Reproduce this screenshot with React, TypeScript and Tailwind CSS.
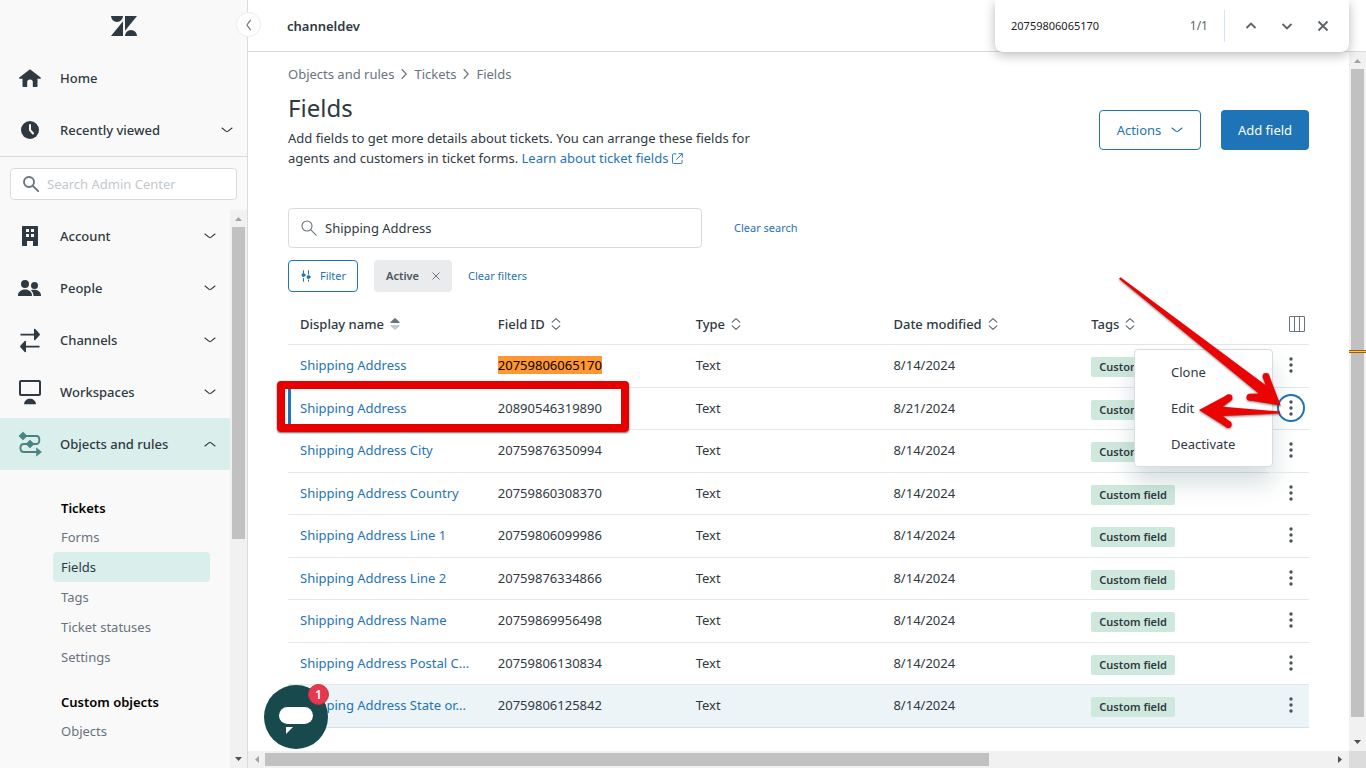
import type { ReactNode } from "react";

type IconProps = { className?: string };

function ChevronDown({ className = "" }: IconProps) {
  return (
    <svg viewBox="0 0 12 12" className={`size-3 shrink-0 ${className}`} fill="none" stroke="currentColor" strokeWidth="1.1" strokeLinecap="round" aria-hidden="true">
      <path d="M1 4l4.2 3.4c.5.4 1.1.4 1.6 0L11 4" />
    </svg>
  );
}

function ChevronRight() {
  return (
    <svg viewBox="0 0 12 12" className="size-3" fill="none" stroke="currentColor" strokeWidth="1.1" strokeLinecap="round" strokeLinejoin="round" aria-hidden="true">
      <path d="M4 1.5L8.2 6 4 10.5" />
    </svg>
  );
}

function SearchIcon({ className = "", width = 1 }: IconProps & { width?: number }) {
  return (
    <svg viewBox="0 0 16 16" className={`size-4 shrink-0 ${className}`} fill="none" stroke="currentColor" strokeWidth={width} strokeLinecap="round" aria-hidden="true">
      <circle cx="6" cy="6" r="5" />
      <path d="M9.8 9.8l5.4 5.4" />
    </svg>
  );
}

function NavIcon({ children }: { children: ReactNode }) {
  return (
    <svg viewBox="0 0 26 26" className="ml-[17px] size-[26px] shrink-0" fill="currentColor" aria-hidden="true">
      {children}
    </svg>
  );
}

const homeIcon = (
  <NavIcon>
    <path d="M13 4.2L2.3 12.6c-.5.5-.2 1.2.4 1.2H5.500v7.500c0 .5.3.800.800.800h3.900v-4.800a2.800 2.800 0 0 1 5.600 0v4.800h3.900c.5 0 .8-.3.8-.8v-7.500h2.800c.6 0 .9-.7.4-1.200L13 4.200z" />
  </NavIcon>
);

const clockIcon = (
  <NavIcon>
    <circle cx="13" cy="13" r="9" />
    <path d="M13 8v5l3 3.500" fill="none" stroke="#f9f9f9" strokeWidth="2" strokeLinecap="round" strokeLinejoin="round" />
  </NavIcon>
);

const accountIcon = (
  <NavIcon>
    <path fillRule="evenodd" d="M6 3h14c.6 0 1 .4 1 1v18c0 .6-.4 1-1 1h-4v-5h-6v5H6c-.6 0-1-.4-1-1V4c0-.6.4-1 1-1zm3 3v3h3V6H9zm5 0v3h3V6h-3zm-5 5v3h3v-3H9zm5 0v3h3v-3h-3z" />
  </NavIcon>
);

const peopleIcon = (
  <NavIcon>
    <circle cx="8" cy="9" r="4" />
    <circle cx="17.500" cy="10.500" r="3.500" />
    <path d="M1 20.500C1 17 4 14.500 8 14.500s7 2.500 7 6v.5H1zM13.800 15.200c4.900-1.200 10.200.5 10.200 5.300v.500h-7.500c0-2.500-1-4.500-2.700-5.800z" />
  </NavIcon>
);

const channelsIcon = (
  <NavIcon>
    <path d="M3.500 6.800H17V2.600c0-.7.800-1 1.300-.5l4.300 4.700c.5.500.5 1 0 1.500l-4.300 4.600c-.5.500-1.300.2-1.300-.5V8.400H3.500zM22.500 18.800H9v-4.200c0-.7-.8-1-1.300-.5l-4.300 4.700c-.5.5-.5 1 0 1.500l4.300 4.600c.5.500 1.300.2 1.300-.5v-4H22.500z" />
  </NavIcon>
);

const workspacesIcon = (
  <NavIcon>
    <rect x="3" y="2" width="20" height="14" rx="1" fill="none" stroke="currentColor" strokeWidth="2" />
    <path d="M7 25.200c.3-3.500 3-5.400 6-5.400s5.700 1.900 6 5.400z" />
  </NavIcon>
);

const rulesIcon = (
  <NavIcon>
    <path d="M6 5h13.500c3.800 0 3.800 8 0 8H7c-4.800 0-4.800 8 0 8h13" fill="none" stroke="currentColor" strokeWidth="1.900" />
    <path d="M6 .900L10.100 5 6 9.100 1.900 5zM13 9l4.100 4-4.100 4-4.100-4zM19.500 17l5 4-5 4.100z" stroke="currentColor" strokeLinejoin="round" strokeWidth=".6" />
  </NavIcon>
);

function NavRow({ icon, label, open, current, chevron = true }: { icon: ReactNode; label: string; open?: boolean; current?: boolean; chevron?: boolean }) {
  return (
    <button type="button" className={`flex h-13 w-full items-center pr-[14px] text-left ${current ? "bg-[#daeeec] text-[#4a8482]" : "text-[#2f3941]"}`}>
      {icon}
      <span className="ml-[17px] grow font-medium text-[#2f3941]">{label}</span>
      {chevron && <ChevronDown className={`text-[#2f3941] ${open ? "rotate-180" : ""}`} />}
    </button>
  );
}

function SubLink({ label, current }: { label: string; current?: boolean }) {
  return (
    <li>
      <a href="#" className={`flex h-[30px] items-center rounded px-2 ${current ? "bg-[#daeeec] text-[#2f3941]" : "text-[#68737d]"}`}>
        {label}
      </a>
    </li>
  );
}

function ScrollArrow({ className }: { className: string }) {
  return (
    <svg viewBox="0 0 17 17" className={`size-[17px] shrink-0 ${className}`} fill="currentColor" aria-hidden="true">
      <path d="M5 11h7L8.500 7z" />
    </svg>
  );
}

function Sidebar() {
  return (
    <aside className="relative flex w-[248px] shrink-0 flex-col border-r border-[#d8dcde] bg-[#f9f9f9]">
      <div className="flex h-13 shrink-0 items-center justify-center">
        <svg viewBox="0 0 26 20" className="h-5 w-[26px]" fill="#2f3941" role="img" aria-label="Zendesk">
          <path d="M0 0h12a6 6 0 0 1-12 0zM12 5.200V20H0zM14 0h12L14 14.800zM14 20a6 6 0 0 1 12 0z" />
        </svg>
      </div>
      <button type="button" aria-label="Collapse navigation" className="absolute top-3 -right-[14px] z-10 flex size-[25px] items-center justify-center rounded-full border border-[#ececee] bg-white text-[#68737d]">
        <svg viewBox="0 0 12 12" className="size-3" fill="none" stroke="currentColor" strokeWidth="1.100" strokeLinecap="round" strokeLinejoin="round" aria-hidden="true">
          <path d="M7.500 1.200L4.300 5.300c-.4.500-.4.900 0 1.400l3.200 4.100" />
        </svg>
      </button>
      <div className="shrink-0 border-b border-[#d8dcde]">
        <NavRow icon={homeIcon} label="Home" chevron={false} />
        <NavRow icon={clockIcon} label="Recently viewed" />
      </div>
      <div className="shrink-0 px-[10px] pt-[11px] pb-[10px]">
        <label className="flex h-8 items-center gap-2 rounded border border-[#d8dcde] bg-white px-3 text-[#68737d]">
          <SearchIcon width={1.9} />
          <input type="search" aria-label="Search Admin Center" placeholder="Search Admin Center" className="w-full min-w-0 bg-transparent outline-none placeholder:text-[#c2c8cc]" />
        </label>
      </div>
      <div className="flex min-h-0 grow">
        <nav className="min-w-0 grow overflow-hidden">
          <NavRow icon={accountIcon} label="Account" />
          <NavRow icon={peopleIcon} label="People" />
          <NavRow icon={channelsIcon} label="Channels" />
          <NavRow icon={workspacesIcon} label="Workspaces" />
          <NavRow icon={rulesIcon} label="Objects and rules" current open />
          <div className="flex flex-col gap-5 pt-7 pr-5 pl-[53px]">
            <section>
              <h2 className="mb-1 px-2 font-semibold text-black">Tickets</h2>
              <ul>
                <SubLink label="Forms" />
                <SubLink label="Fields" current />
                <SubLink label="Tags" />
                <SubLink label="Ticket statuses" />
                <SubLink label="Settings" />
              </ul>
            </section>
            <section>
              <h2 className="mb-1 px-2 font-semibold text-black">Custom objects</h2>
              <ul>
                <SubLink label="Objects" />
              </ul>
            </section>
          </div>
        </nav>
        <div className="flex w-[17px] shrink-0 flex-col bg-[#f1f1f1]">
          <ScrollArrow className="text-[#a3a3a3]" />
          <div className="min-h-0 grow">
            <div className="mx-auto h-[59.600%] w-[13px] bg-[#c1c1c1]" />
          </div>
          <ScrollArrow className="rotate-180 text-[#505050]" />
        </div>
      </div>
    </aside>
  );
}

function FindBar() {
  return (
    <div role="search" className="absolute top-0 right-[17px] z-30 flex h-[52px] w-[354px] items-center rounded-b-lg bg-white pr-3 pl-4 shadow-[0_3px_12px_rgba(0,0,0,0.28)]">
      <input aria-label="Find in page" defaultValue="20759806065170" className="min-w-0 grow bg-transparent text-[11px] text-[#202124] outline-none" />
      <span className="mr-4 text-xs text-[#5f6368]">1/1</span>
      <span className="mr-3 h-8 w-px bg-[#d3e3fd]" />
      <div className="flex text-[#5f6368]">
        {[
          ["Previous", "M3.500 9L8 4.500 12.500 9"],
          ["Next", "M3.500 5L8 9.500 12.500 5"],
          ["Close", "M3.500 2.500l9 9M12.500 2.500l-9 9"],
        ].map(([name, d]) => (
          <button key={name} type="button" aria-label={name} className="flex size-7 items-center justify-center not-last:mr-2">
            <svg viewBox="0 0 16 14" className="h-[14px] w-4" fill="none" stroke="currentColor" strokeWidth="1.900" aria-hidden="true">
              <path d={d} />
            </svg>
          </button>
        ))}
      </div>
    </div>
  );
}

function SortIcon({ active }: { active?: boolean }) {
  return active ? (
    <svg viewBox="0 0 10 12" className="h-3 w-[10px]" aria-hidden="true">
      <path d="M1 5h8c.6 0 .8-.5.5-.9L5.700.400a1 1 0 0 0-1.400 0L.500 4.100C.200 4.500.400 5 1 5z" fill="#68737d" />
      <path d="M1 7h8c.6 0 .8.5.5.9l-3.800 3.700a1 1 0 0 1-1.400 0L.500 7.900C.200 7.500.400 7 1 7z" fill="#c2c8cc" />
    </svg>
  ) : (
    <svg viewBox="0 0 10 12" className="h-3 w-[10px]" fill="none" stroke="#5c6770" strokeWidth="1.100" strokeLinecap="round" strokeLinejoin="round" aria-hidden="true">
      <path d="M1.200 4.200L5 .700l3.800 3.500M1.200 7.800L5 11.300l3.800-3.500" />
    </svg>
  );
}

function Kebab() {
  return (
    <svg viewBox="0 0 16 16" className="size-4" fill="#49545c" aria-hidden="true">
      <circle cx="8" cy="2" r="1.700" />
      <circle cx="8" cy="8" r="1.700" />
      <circle cx="8" cy="14" r="1.700" />
    </svg>
  );
}

function Arrows() {
  return (
    <svg viewBox="0 0 174 160" className="pointer-events-none absolute -top-[113px] right-5 z-20 h-40 w-[174px] max-w-none drop-shadow-[0_1px_1px_rgba(0,0,0,0.5)]" fill="#ea0404" aria-hidden="true">
      <path d="M4 3.700L5.500 2.300 150.500 110l-2.700-8 6.200-2 11.700 30.500-31-5v-6.700l9-.300z" />
      <circle cx="151" cy="101.500" r="3.400" />
      <circle cx="135" cy="122.200" r="3.500" />
      <path d="M84 135l28.500-15.300 3.300 6-7.800 6L165 136.500v2L108 141l7.300 5.800-3.500 5.700z" />
      <circle cx="114" cy="122.700" r="3.400" />
      <circle cx="113.300" cy="149.500" r="3.400" />
    </svg>
  );
}

const columns = ["Display name", "Field ID", "Type", "Date modified", "Tags"];

const rows = [
  { name: "Shipping Address", id: "20759806065170", date: "8/14/2024", found: true },
  { name: "Shipping Address", id: "20890546319890", date: "8/21/2024", open: true },
  { name: "Shipping Address City", id: "20759876350994", date: "8/14/2024" },
  { name: "Shipping Address Country", id: "20759860308370", date: "8/14/2024" },
  { name: "Shipping Address Line 1", id: "20759806099986", date: "8/14/2024" },
  { name: "Shipping Address Line 2", id: "20759876334866", date: "8/14/2024" },
  { name: "Shipping Address Name", id: "20759869956498", date: "8/14/2024" },
  { name: "Shipping Address Postal C...", id: "20759806130834", date: "8/14/2024" },
  { name: "Shipping Address State or...", id: "20759806125842", date: "8/14/2024", hover: true },
];

function FieldsTable() {
  return (
    <table className="mt-3 w-full table-fixed border-separate border-spacing-0 text-left">
      <thead>
        <tr className="h-[41px]">
          {columns.map((column, i) => (
            <th key={column} scope="col" className={`border-b border-[#e4e6e8] px-3 font-medium ${i < 4 ? "w-[19.375%]" : ""}`}>
              <button type="button" className="flex items-center gap-1.5">
                {column}
                <SortIcon active={i === 0} />
              </button>
            </th>
          ))}
          <th scope="col" className="w-10 border-b border-[#e4e6e8] pl-5">
            <button type="button" aria-label="Choose columns" className="block">
              <svg viewBox="0 0 16 16" className="size-4" fill="none" stroke="#68737d" aria-hidden="true">
                <rect x=".5" y=".5" width="15" height="15" rx=".5" />
                <path d="M5.500 1v14M10.500 1v14" />
              </svg>
            </button>
          </th>
        </tr>
      </thead>
      <tbody>
        {rows.map((row) => {
          const cell = `border-b px-3 ${row.hover ? "border-[#cee2f2] bg-[#edf4f8]" : "border-[#e4e6e8]"}`;
          return (
            <tr key={row.id} className="odd:h-[43px] even:h-[42px]">
              <td className={`relative pb-0.5 ${cell} ${row.open ? "shadow-[inset_3px_0_#1f73b7]" : ""}`}>
                <a href="#" className="block whitespace-nowrap text-[#1f73b7]">{row.name}</a>
                {row.open && (
                  <div className="pointer-events-none absolute -top-[7px] -left-[11px] z-10 h-[51px] w-[352px] rounded border-8 border-[#e60000] shadow-[0_1px_2px_rgba(0,0,0,0.6)]" />
                )}
              </td>
              <td className={`pb-0.5 ${cell}`}>{row.found ? <mark className="bg-[#ff9632] text-black">{row.id}</mark> : row.id}</td>
              <td className={`pb-0.5 ${cell}`}>Text</td>
              <td className={`pb-0.5 ${cell}`}>{row.date}</td>
              <td className={`pt-0.5 ${cell}`}>
                <span className="flex h-5 w-fit items-center rounded-xs bg-[#cfe8dd] px-2 text-[11px] font-semibold whitespace-nowrap">Custom field</span>
              </td>
              <td className={`relative pb-0.5 pl-[10px] ${cell}`}>
                <button type="button" aria-label="Row actions" className={`flex size-6 items-center justify-center rounded-full ${row.open ? "relative z-10 bg-white ring-2 ring-[#1f73b7]" : ""}`}>
                  <Kebab />
                </button>
                {row.open && (
                  <>
                    <div role="menu" className="absolute -top-[39px] right-9 flex h-[118px] w-[139px] flex-col justify-center rounded border border-[#d8dcde] bg-white shadow-[0_16px_24px_rgba(23,73,77,0.18)]">
                      {["Clone", "Edit", "Deactivate"].map((item) => (
                        <button key={item} type="button" role="menuitem" className="h-9 pl-9 text-left">
                          {item}
                        </button>
                      ))}
                    </div>
                    <Arrows />
                  </>
                )}
              </td>
            </tr>
          );
        })}
      </tbody>
    </table>
  );
}

function Content() {
  return (
    <main className="min-w-0 grow overflow-hidden px-10 pt-3">
      <nav aria-label="Breadcrumb" className="flex items-center gap-1 text-[#68737d]">
        <a href="#">Objects and rules</a>
        <ChevronRight />
        <a href="#">Tickets</a>
        <ChevronRight />
        <span>Fields</span>
      </nav>
      <div className="mt-2 flex items-center justify-between">
        <div>
          <h1 className="mb-1 text-2xl">Fields</h1>
          <p className="max-w-[480px]">
            Add fields to get more details about tickets. You can arrange these fields for agents and customers in ticket forms.{" "}
            <a href="#" className="whitespace-nowrap text-[#1f73b7]">
              Learn about ticket fields
              <svg viewBox="0 0 12 12" className="ml-1 inline size-[11px] align-[-1px]" fill="none" stroke="currentColor" strokeLinecap="round" strokeLinejoin="round" aria-hidden="true">
                <path d="M4.500 1H1.500a1 1 0 0 0-1 1v8.500a1 1 0 0 0 1 1H10a1 1 0 0 0 1-1V8M7.500.700h3.800v3.800M11 1L5 7" />
              </svg>
            </a>
          </p>
        </div>
        <div className="flex gap-5">
          <button type="button" className="flex h-10 w-[102px] items-center justify-center gap-[10px] rounded border border-[#1f73b7] text-[#1f73b7]">
            Actions
            <ChevronDown />
          </button>
          <button type="button" className="h-10 w-22 rounded bg-[#1f73b7] text-white">Add field</button>
        </div>
      </div>
      <div className="mt-10 flex items-center gap-8">
        <label className="flex h-10 w-[414px] items-center gap-2 rounded border border-[#d8dcde] px-3 text-[#68737d]">
          <SearchIcon width={1.1} />
          <input aria-label="Search fields" defaultValue="Shipping Address" className="w-full min-w-0 bg-transparent text-[#2f3941] outline-none" />
        </label>
        <button type="button" className="text-[11px] text-[#1f73b7]">Clear search</button>
      </div>
      <div className="mt-3 flex items-center gap-4 text-[11px] text-[#1f73b7]">
        <button type="button" className="flex h-8 w-[70px] items-center justify-center gap-2 rounded border border-[#1f73b7]">
          <svg viewBox="0 0 12 12" className="size-3" fill="currentColor" stroke="currentColor" strokeLinecap="round" aria-hidden="true">
            <path d="M3.500.700v2M3.500 8.500v2.800M8.500.700v3.500M8.500 10v1.300" />
            <circle cx="3.500" cy="5" r="1.500" />
            <circle cx="8.500" cy="7" r="1.500" />
          </svg>
          Filter
        </button>
        <span className="flex h-8 w-[78px] items-center justify-between rounded bg-[#e9ebed] px-3 font-semibold text-[#49545c]">
          Active
          <button type="button" aria-label="Remove filter">
            <svg viewBox="0 0 8 8" className="size-2" fill="none" stroke="#68737d" strokeLinecap="round" aria-hidden="true">
              <path d="M.8.800l6.400 6.400M7.200.800L.800 7.200" />
            </svg>
          </button>
        </span>
        <button type="button">Clear filters</button>
      </div>
      <FieldsTable />
    </main>
  );
}

export default function App() {
  return (
    <div className="relative flex h-screen overflow-hidden bg-white font-['Noto_Sans','Open_Sans',sans-serif] text-[13px] leading-5 text-[#2f3941]">
      <Sidebar />
      <div className="relative flex min-w-0 grow flex-col">
        <header className="flex h-13 shrink-0 items-center border-b border-[#d8dcde] px-[39px] font-semibold">channeldev</header>
        <div className="flex min-h-0 grow">
          <Content />
          <div className="flex w-[17px] shrink-0 flex-col bg-[#f1f1f1]">
            <ScrollArrow className="text-[#a3a3a3]" />
            <div className="relative min-h-0 grow">
              <div className="mx-auto h-[97.500%] w-[13px] bg-[#c1c1c1]" />
              <div className="absolute top-[42.300%] h-[3px] w-full border-y border-[#a15c00] bg-[#ffc83d]" />
            </div>
            <ScrollArrow className="rotate-180 text-[#505050]" />
          </div>
        </div>
        <div className="flex h-[17px] shrink-0 items-center bg-[#f1f1f1]">
          <ScrollArrow className="-rotate-90 text-[#a3a3a3]" />
          <div className="min-w-0 grow">
            <div className="h-[13px] w-[67.900%] bg-[#c1c1c1]" />
          </div>
          <ScrollArrow className="rotate-90 text-[#505050]" />
          <span className="size-[17px] shrink-0 bg-[#dcdcdc]" />
        </div>
        <button type="button" aria-label="Open chat" className="absolute bottom-[19px] left-4 z-10 size-16 rounded-full bg-[#17494d]">
          <svg viewBox="0 0 64 64" className="size-16" fill="white" aria-hidden="true">
            <rect x="15" y="22" width="34" height="17" rx="8.500" />
            <path d="M22 42h7l-7 7z" />
          </svg>
          <span className="absolute -top-px -right-px flex size-[21px] items-center justify-center rounded-full border border-[#cc3340] bg-[#e63950] text-xs font-semibold text-white">1</span>
        </button>
      </div>
      <FindBar />
    </div>
  );
}
